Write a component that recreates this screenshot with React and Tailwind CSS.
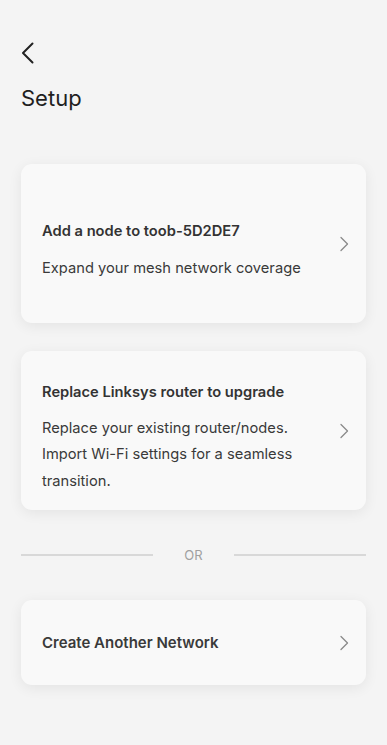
import React from 'react'

function Chevron({ className }) {
  return (
    <svg viewBox="0 0 10 16" className={className} fill="none" stroke="currentColor" strokeWidth="1.3" strokeLinecap="round" strokeLinejoin="round">
      <path d="M2 1.5 L8.5 8 L2 14.5" />
    </svg>
  )
}

function Card({ children, className, bodyClass = '' }) {
  return (
    <div className={`flex items-center rounded-[11px] bg-[#f9f9f9] shadow-[0_3px_14px_rgba(0,0,0,0.07)] pl-[21px] pr-[17px] ${className}`}>
      <div className={`flex-1 ${bodyClass}`}>{children}</div>
      <Chevron className="w-[10px] h-[16px] text-[#8a8a8a]" />
    </div>
  )
}

export default function App() {
  return (
    <div className="min-h-[745px] bg-[#f4f4f4] px-[21px] pt-[42px] pb-10 text-[#2e2e2e]" style={{ fontFamily: 'Inter, "Noto Sans", sans-serif' }}>
      <button className="block">
        <svg viewBox="0 0 14 22" className="w-[14px] h-[22px]" fill="none" stroke="#222" strokeWidth="2" strokeLinecap="round" strokeLinejoin="round">
          <path d="M11.5 1.5 L2 11 L11.5 20.5" />
        </svg>
      </button>
      <h1 className="mt-[19px] text-[22px] leading-[30px] font-normal text-[#1f1f1f]">Setup</h1>

      <div className="mt-[51px] flex flex-col">
        <Card className="h-[159px]" bodyClass="pt-3">
          <div className="text-[14.7px] leading-[26px] font-semibold text-[#333]">Add a node to toob-5D2DE7</div>
          <div className="mt-[11px] text-[14.7px] leading-[26px] text-[#3a3a3a]">Expand your mesh network coverage</div>
        </Card>

        <Card className="mt-[28px] h-[159px]" bodyClass="pt-3">
          <div className="text-[14.7px] leading-[26px] font-semibold text-[#333]">Replace Linksys router to upgrade</div>
          <div className="mt-[10px] text-[14.7px] leading-[26.5px] text-[#3a3a3a] pr-6">
            Replace your existing router/nodes. Import Wi-Fi settings for a seamless transition.
          </div>
        </Card>

        <div className="mt-[37px] flex items-center">
          <div className="flex-1 h-[1.5px] bg-[#d8d8d8]" />
          <span className="w-[81px] text-center text-[13px] leading-[16px] text-[#a0a0a0]">OR</span>
          <div className="flex-1 h-[1.5px] bg-[#d8d8d8]" />
        </div>

        <Card className="mt-[37px] h-[85px]">
          <div className="text-[15px] leading-[24px] font-semibold text-[#3a3a3a]">Create Another Network</div>
        </Card>
      </div>
    </div>
  )
}
